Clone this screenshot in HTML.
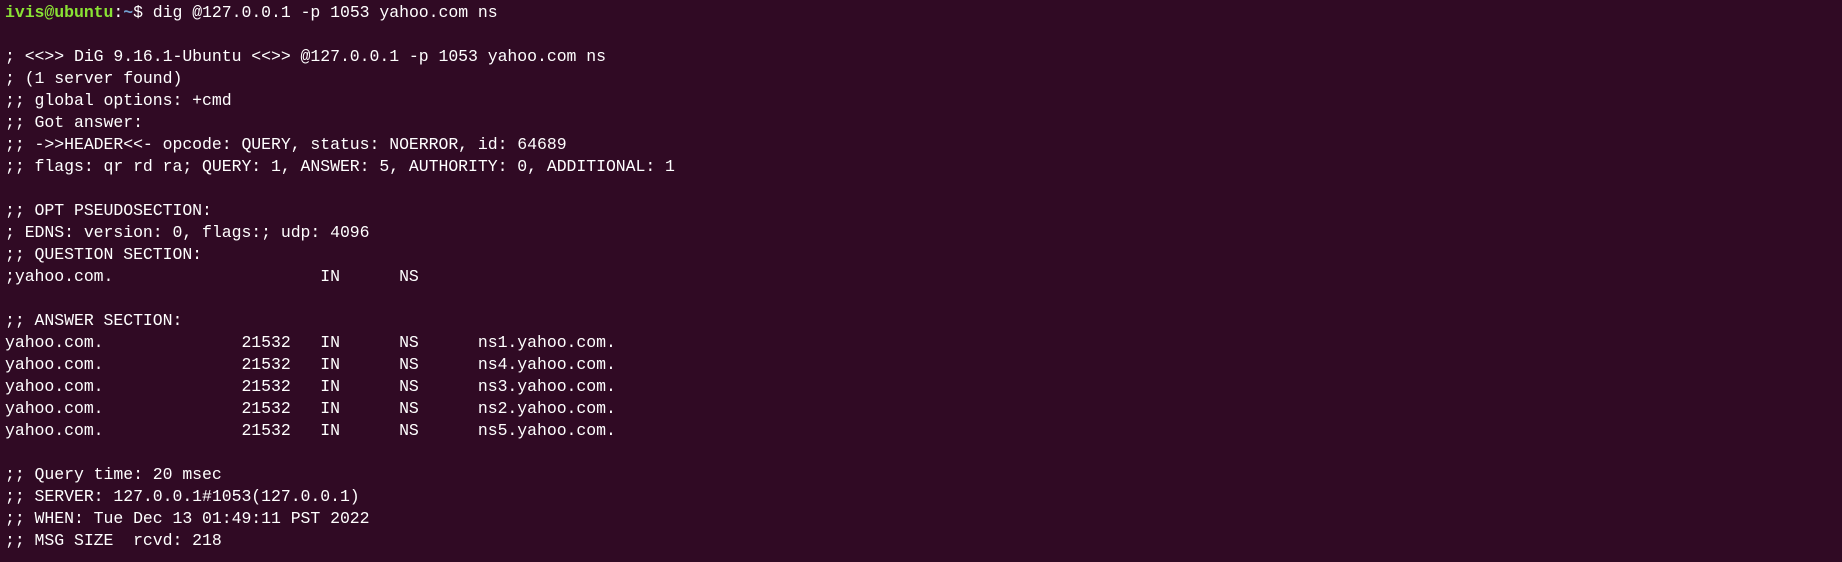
<!DOCTYPE html>
<html><head><meta charset="utf-8"><style>
html,body{margin:0;padding:0;background:#300a24;width:1842px;height:562px;overflow:hidden}
pre{margin:0;position:absolute;left:5px;top:2px;font-family:"Liberation Mono",monospace;font-size:16.5px;line-height:22px;letter-spacing:-0.05px;color:#ffffff}
.g{color:#8ae234;font-weight:bold}.b{color:#729fcf;font-weight:bold}
</style></head><body><pre><span class="g">ivis@ubuntu</span>:<span class="b">~</span>$ dig @127.0.0.1 -p 1053 yahoo.com ns

; &lt;&lt;&gt;&gt; DiG 9.16.1-Ubuntu &lt;&lt;&gt;&gt; @127.0.0.1 -p 1053 yahoo.com ns
; (1 server found)
;; global options: +cmd
;; Got answer:
;; -&gt;&gt;HEADER&lt;&lt;- opcode: QUERY, status: NOERROR, id: 64689
;; flags: qr rd ra; QUERY: 1, ANSWER: 5, AUTHORITY: 0, ADDITIONAL: 1

;; OPT PSEUDOSECTION:
; EDNS: version: 0, flags:; udp: 4096
;; QUESTION SECTION:
;yahoo.com.                     IN      NS

;; ANSWER SECTION:
yahoo.com.              21532   IN      NS      ns1.yahoo.com.
yahoo.com.              21532   IN      NS      ns4.yahoo.com.
yahoo.com.              21532   IN      NS      ns3.yahoo.com.
yahoo.com.              21532   IN      NS      ns2.yahoo.com.
yahoo.com.              21532   IN      NS      ns5.yahoo.com.

;; Query time: 20 msec
;; SERVER: 127.0.0.1#1053(127.0.0.1)
;; WHEN: Tue Dec 13 01:49:11 PST 2022
;; MSG SIZE  rcvd: 218</pre></body></html>
